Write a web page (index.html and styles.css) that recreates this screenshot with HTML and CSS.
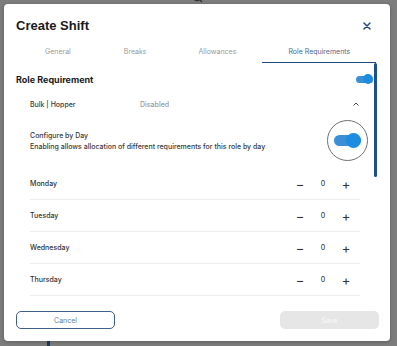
FILE: index.html
```html
<!DOCTYPE html>
<html>
<head>
<meta charset="utf-8">
<link rel="stylesheet" href="styles.css">
</head>
<body>
<div class="backdrop">
  <div class="bg-bar"><span class="bg-search">Search</span>
    <svg class="bg-icon" width="10" height="10" viewBox="0 0 10 10"><circle cx="4" cy="0" r="3.5" fill="none" stroke="#333" stroke-width="1.4"/><path d="M6.5 2.5 9 5" stroke="#333" stroke-width="1.4"/></svg>
  </div>
  <div class="bg-line"></div>
</div>
<div class="modal">
  <div class="header">
    <h1 class="title">Create Shift</h1>
    <svg class="close" width="8" height="8" viewBox="0 0 8 8"><path d="M1 1 7 7M7 1 1 7" stroke="#234b7c" stroke-width="1.5" stroke-linecap="round"/></svg>
  </div>
  <div class="tabs">
    <div class="tab">General</div>
    <div class="tab">Breaks</div>
    <div class="tab">Allowances</div>
    <div class="tab active">Role Requirements</div>
  </div>
  <div class="content-wrap">
    <div class="content">
      <div class="section-head">
        <span class="section-title">Role Requirement</span>
        <span class="toggle small"><span class="knob"></span></span>
      </div>
      <div class="role-row">
        <span class="role-name">Bulk | Hopper</span>
        <span class="role-status">Disabled</span>
        <svg class="caret" width="8" height="6" viewBox="0 0 8 6"><path d="M1.5 4.5 4 2 6.5 4.5" fill="none" stroke="#444" stroke-width="1"/></svg>
      </div>
      <div class="config">
        <div class="config-text">
          <div>Configure by Day</div>
          <div>Enabling allows allocation of different requirements for this role by day</div>
        </div>
        <span class="focus-ring"><span class="toggle large"><span class="knob"></span></span></span>
      </div>
      <div class="days">
        <div class="day"><span class="day-name">Monday</span><span class="stepper"><span class="minus">−</span><span class="val">0</span><span class="plus">+</span></span></div>
        <div class="day"><span class="day-name">Tuesday</span><span class="stepper"><span class="minus">−</span><span class="val">0</span><span class="plus">+</span></span></div>
        <div class="day"><span class="day-name">Wednesday</span><span class="stepper"><span class="minus">−</span><span class="val">0</span><span class="plus">+</span></span></div>
        <div class="day"><span class="day-name">Thursday</span><span class="stepper"><span class="minus">−</span><span class="val">0</span><span class="plus">+</span></span></div>
      </div>
    </div>
    <div class="scroll-thumb"></div>
  </div>
  <div class="footer">
    <button class="btn cancel">Cancel</button>
    <button class="btn save">Save</button>
  </div>
</div>
</body>
</html>
```
FILE: styles.css
```css
* { box-sizing: border-box; }
html, body { margin: 0; padding: 0; }
body {
  width: 397px;
  height: 346px;
  overflow: hidden;
  background: #7d7d7d;
  font-family: "Inter", "Open Sans", sans-serif;
  color: #333;
  position: relative;
}
.backdrop { position: absolute; inset: 0; }
.bg-bar { height: 4px; position: relative; }
.bg-search { position: absolute; left: 70px; top: -8px; font-size: 8px; color: #444; }
.bg-icon { position: absolute; left: 193px; top: -3px; }
.bg-line { position: absolute; left: 47px; top: 341px; width: 3px; height: 5px; background: #1d3a60; }

.modal {
  position: absolute;
  left: 4px;
  top: 4px;
  width: 386px;
  height: 337px;
  background: #fff;
  border-radius: 4px;
  box-shadow: 0 1px 4px rgba(0,0,0,0.25);
  display: flex;
  flex-direction: column;
}
.header {
  display: flex;
  align-items: center;
  justify-content: space-between;
  padding: 13px 19px 0 12px;
  height: 30px;
  flex: none;
}
.title {
  margin: 0;
  font-family: "Liberation Sans", Arial, sans-serif;
  font-size: 13px;
  line-height: 17px;
  font-weight: 700;
  color: #1a1a1a;
}
.close { display: block; }
.tabs {
  display: flex;
  margin: 9px 0 0 15px;
  height: 20px;
  flex: none;
}
.tab {
  padding: 0 26px;
  font-size: 7px;
  color: #9a9a9a;
  line-height: 18px;
  text-align: center;
}
.tab:first-child { padding-left: 26px; padding-right: 27px; }
.active {
  color: #4f6788;
  border-bottom: 1px solid #1f4b80;
  padding: 0 26px;
}
.content-wrap {
  flex: 1;
  position: relative;
  overflow: hidden;
}
.content {
  height: 100%;
  overflow: hidden;
  margin-right: 16px;
  padding: 0 0 0 12px;
}
.scroll-thumb {
  position: absolute;
  right: 13px;
  top: 0;
  width: 3px;
  height: 114px;
  background: #1c4f8c;
  border-radius: 2px;
}

.section-head {
  display: flex;
  align-items: center;
  justify-content: space-between;
  height: 32px;
  padding-right: 1px;
}
.section-title { font-size: 9px; font-weight: 700; color: #1a1a1a; }
.toggle {
  position: relative;
  display: inline-block;
  background: #3a8fd6;
  border-radius: 6px;
}
.toggle .knob {
  position: absolute;
  right: 0;
  border-radius: 50%;
  background: #1d8be0;
}
.toggle.small { width: 17px; height: 7px; }
.toggle.small .knob { width: 10px; height: 10px; top: -1.5px; }
.role-row {
  display: flex;
  align-items: center;
  height: 18px;
  padding-left: 14px;
  padding-right: 14px;
  font-size: 7px;
  font-weight: 500;
}
.role-name { width: 110px; color: #3a3a3a; }
.role-status { color: #9a9a9a; flex: 1; }
.caret { display: block; }
.config {
  display: flex;
  align-items: center;
  justify-content: space-between;
  padding: 0 6px 0 14px;
  height: 55px;
}
.config-text { font-size: 7px; line-height: 11px; color: #3a3a3a; font-weight: 500; }
.focus-ring {
  width: 41px;
  height: 41px;
  border: 1px solid #707070;
  border-radius: 50%;
  display: flex;
  align-items: center;
  justify-content: center;
}
.toggle.large { width: 27px; height: 11px; }
.toggle.large .knob { width: 15px; height: 15px; top: -2px; }
.days { padding: 0 14px 0 14px; }
.day {
  display: flex;
  align-items: center;
  justify-content: space-between;
  height: 32px;
  border-bottom: 1px solid #eeeeee;
  font-size: 7px;
  font-weight: 500;
  color: #333;
}
.stepper { display: flex; align-items: center; gap: 13px; padding-right: 9px; }
.minus, .plus { font-size: 13px; line-height: 12px; color: #333; width: 10px; text-align: center; font-weight: 400; }
.val { font-size: 7px; color: #444; width: 10px; text-align: center; }
.footer {
  display: flex;
  justify-content: space-between;
  padding: 11px 11px 12px 12px;
  flex: none;
}
.btn {
  width: 99px;
  height: 18px;
  border-radius: 5px;
  font-family: inherit;
  font-size: 7px;
  padding: 0;
}
.cancel { background: #fff; border: 1.5px solid #3e6189; color: #6a7f9a; }
.save { background: #e6e6e6; border: none; color: #fafafa; }
```
